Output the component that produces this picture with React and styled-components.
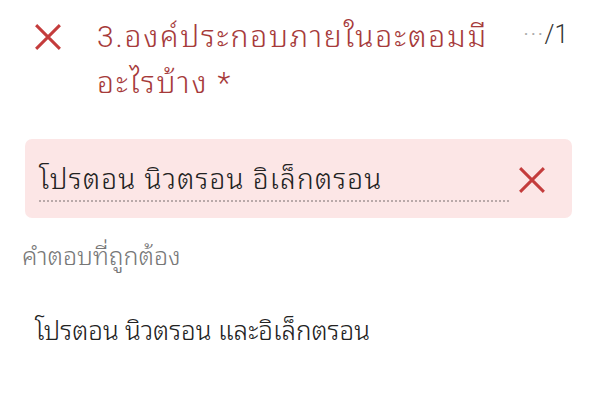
import React from 'react';
import styled, { createGlobalStyle } from 'styled-components';

const GlobalStyle = createGlobalStyle`
  html, body {
    margin: 0;
    padding: 0;
    background: #fff;
  }
  body {
    font-family: "Roboto", "Noto Sans Thai Looped", "Noto Sans Thai", "Noto Sans", sans-serif;
    font-weight: 300;
  }
`;

const Page = styled.div`
  width: 612px;
  height: 410px;
  box-sizing: border-box;
  padding: 14px 0 0 24px;
  overflow: hidden;
`;

const Header = styled.div`
  display: flex;
  align-items: flex-start;
`;

const HeadIcon = styled.div`
  width: 30px;
  height: 30px;
  margin: 8px 0 0 9px;
  flex-shrink: 0;
`;

const Title = styled.div`
  width: 420px;
  margin-left: 34px;
  color: #a63a3a;
  font-size: 30px;
  line-height: 46px;
  letter-spacing: 1.8px;
  white-space: nowrap;
`;

const Score = styled.div`
  margin-left: 6px;
  color: #333;
  font-size: 25px;
  line-height: 46px;
  margin-top: -2px;
`;

const Dots = styled.span`
  color: #aaa;
  letter-spacing: 1px;
`;

const AnswerBox = styled.div`
  margin-top: 33px;
  margin-left: 1px;
  width: 547px;
  height: 79px;
  box-sizing: border-box;
  background: #fce6e6;
  border-radius: 7px;
  display: flex;
  align-items: center;
  padding: 0 25px 0 14px;
`;

const AnswerText = styled.div`
  flex: 1;
  margin-right: 8px;
  font-size: 28px;
  line-height: 40px;
  color: #222;
  border-bottom: 2px dotted #b9a9a9;
  margin-top: 4px;
  letter-spacing: 1.2px;
`;

const BoxIcon = styled.div`
  width: 30px;
  height: 30px;
  margin-top: 2px;
`;

const Label = styled.div`
  margin-top: 17px;
  margin-left: -2px;
  font-size: 25px;
  line-height: 44px;
  color: #777;
`;

const Correct = styled.div`
  margin-top: 30px;
  margin-left: 11px;
  font-size: 26px;
  line-height: 44px;
  color: #222;
`;

const Cross = ({ size = 30 }) => (
  <svg width={size} height={size} viewBox="0 0 24 24" fill="none" stroke="#c43c3c" strokeWidth="2.4" strokeLinecap="butt">
    <path d="M2.5 2.5 L21.5 21.5 M21.5 2.5 L2.5 21.5" />
  </svg>
);

export default function App() {
  return (
    <>
      <GlobalStyle />
      <Page>
        <Header>
          <HeadIcon><Cross size={30} /></HeadIcon>
          <Title>3.องค์ประกอบภายในอะตอมมี<br />อะไรบ้าง *</Title>
          <Score><Dots>···</Dots>/1</Score>
        </Header>
        <AnswerBox>
          <AnswerText>โปรตอน นิวตรอน อิเล็กตรอน</AnswerText>
          <BoxIcon><Cross size={30} /></BoxIcon>
        </AnswerBox>
        <Label>คำตอบที่ถูกต้อง</Label>
        <Correct>โปรตอน นิวตรอน และอิเล็กตรอน</Correct>
      </Page>
    </>
  );
}
